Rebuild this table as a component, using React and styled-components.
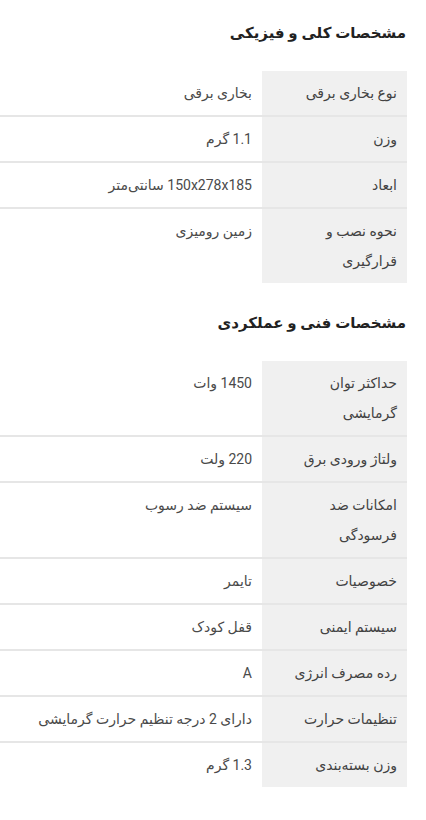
import styled, { createGlobalStyle } from "styled-components";

const GlobalStyle = createGlobalStyle`
  body {
    margin: 0;
    background: #fff;
    font-family: Roboto, "DejaVu Sans", sans-serif;
  }
`;

const general = [
  ["نوع بخاری برقی", "بخاری برقی"],
  ["وزن", "1.1 گرم"],
  ["ابعاد", "150x278x185 سانتی‌متر"],
  ["نحوه نصب و قرارگیری", "زمین رومیزی"],
];

const technical = [
  ["حداکثر توان گرمایشی", "1450 وات"],
  ["ولتاژ ورودی برق", "220 ولت"],
  ["امکانات ضد فرسودگی", "سیستم ضد رسوب"],
  ["خصوصیات", "تایمر"],
  ["سیستم ایمنی", "قفل کودک"],
  ["رده مصرف انرژی", "A"],
  ["تنظیمات حرارت", "دارای 2 درجه تنظیم حرارت گرمایشی"],
  ["وزن بسته‌بندی", "1.3 گرم"],
];

const Page = styled.div`
  direction: rtl;
  padding: 21px 19px 0 0;
`;

const Section = styled.section`
  & + & {
    margin-top: 28px;
  }
`;

const Title = styled.h2`
  margin: 0 0 26px;
  font-size: 15px;
  line-height: 24px;
  font-weight: 700;
  color: #222;
  padding-right: 1px;
`;

const Table = styled.div`
  display: grid;
  grid-template-columns: 145px 1fr;
`;

const Cell = styled.div`
  padding: 7px 10px 7px ${(p) => (p.$label ? "18px" : "10px")};
  font-size: 14px;
  line-height: 30px;
  color: ${(p) => (p.$label ? "#424242" : "#4a4a4a")};
  background: ${(p) => (p.$label ? "#f0f0f0" : "transparent")};
  border-bottom: ${(p) => (p.$last ? "none" : "2px solid #e6e6e6")};
`;

const SpecTable = ({ rows }) => (
  <Table>
    {rows.map(([k, v], i) => {
      const last = i === rows.length - 1;
      return [
        <Cell key={k} $label $last={last}>{k}</Cell>,
        <Cell key={k + "v"} $last={last}>{v}</Cell>,
      ];
    })}
  </Table>
);

export default function App() {
  return (
    <Page>
      <GlobalStyle />
      <Section>
        <Title>مشخصات کلی و فیزیکی</Title>
        <SpecTable rows={general} />
      </Section>
      <Section>
        <Title>مشخصات فنی و عملکردی</Title>
        <SpecTable rows={technical} />
      </Section>
    </Page>
  );
}
